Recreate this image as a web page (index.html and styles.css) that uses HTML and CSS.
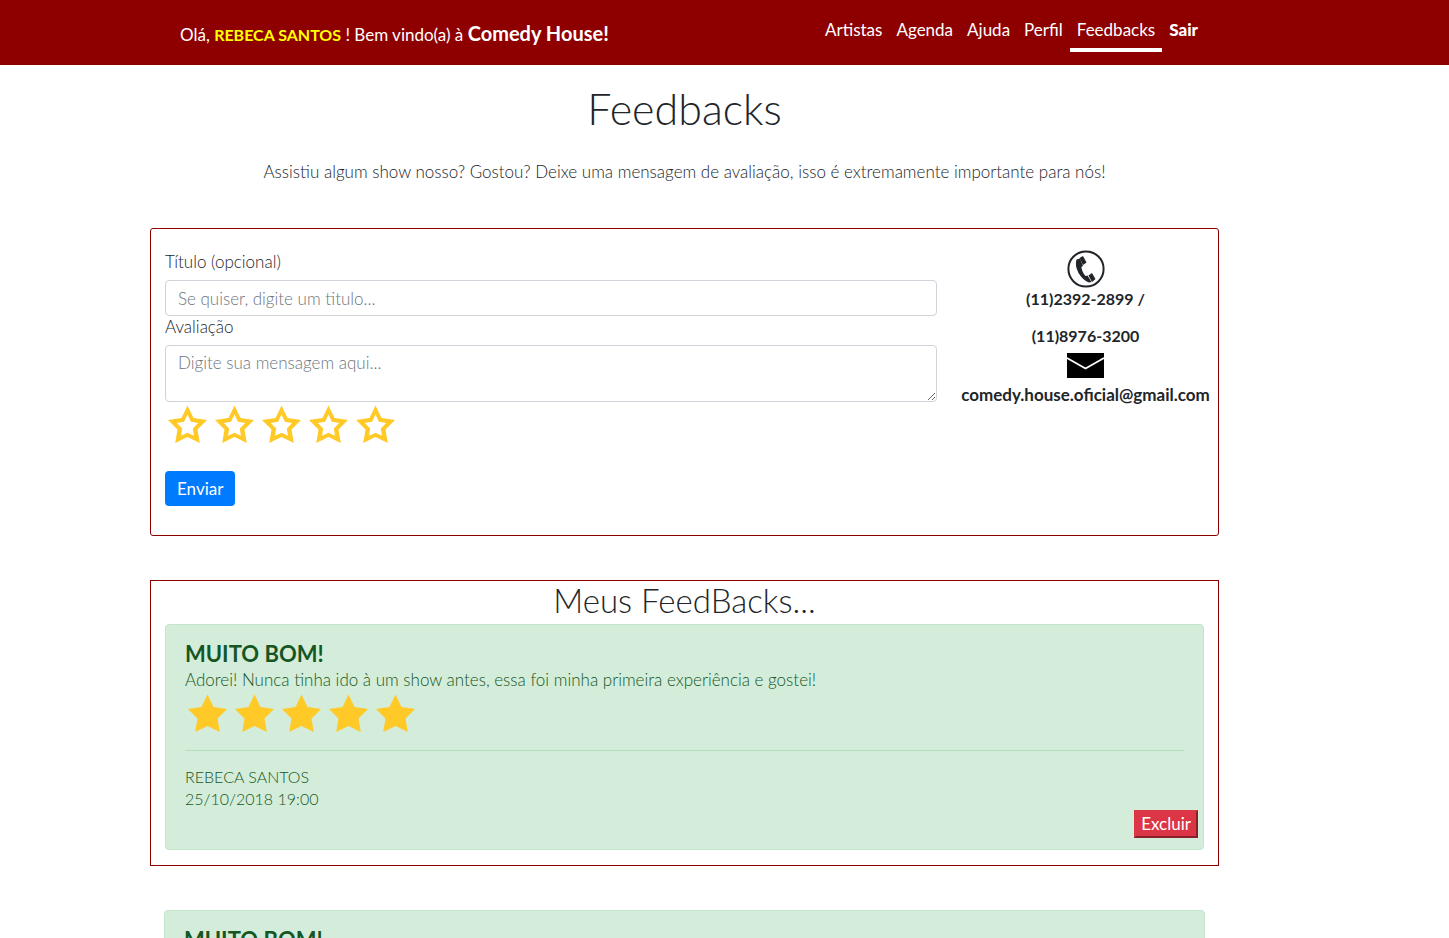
FILE: index.html
```html
<!DOCTYPE html>
<html lang="pt-BR">
<head>
<meta charset="utf-8">
<title>Feedbacks - Comedy House</title>
<link rel="stylesheet" href="styles.css">
</head>
<body>
<svg class="sprite" aria-hidden="true">
  <symbol id="star-empty" viewBox="1 0 46 46"><path fill="#ffca28" fill-rule="evenodd" d="M23 3.500l6 12.500 13.500 2-9.500 9.500 2.300 13.500L23 35l-12.300 6L13 27.500 3.500 18 17 16zM23 12.500l-3.400 7.300-7.300 1.200 5.400 5.500-1.200 7.300L23 30.800l6.500 3-1.200-7.300 5.400-5.500-7.300-1.200z"/></symbol>
  <symbol id="star-full" viewBox="1 0 46 46"><path fill="#ffca28" d="M23 3.500l6 12.500 13.500 2-9.500 9.500 2.300 13.500L23 35l-12.300 6L13 27.500 3.500 18 17 16z"/></symbol>
</svg>
<header class="topbar">
  <p class="greeting">Olá, <strong class="user">REBECA SANTOS</strong> ! Bem vindo(a) à <strong class="brand">Comedy House!</strong></p>
  <nav class="menu">
    <a href="#">Artistas</a>
    <a href="#">Agenda</a>
    <a href="#">Ajuda</a>
    <a href="#">Perfil</a>
    <a href="#" class="active" aria-current="page">Feedbacks</a>
    <a href="#" class="exit">Sair</a>
  </nav>
</header>
<main class="page">
  <h1 class="title">Feedbacks</h1>
  <p class="intro">Assistiu algum show nosso? Gostou? Deixe uma mensagem de avaliação, isso é extremamente importante para nós!</p>

  <section class="panel form-panel">
    <form class="form">
      <label for="titulo">Título (opcional)</label>
      <input class="field" id="titulo" type="text" placeholder="Se quiser, digite um titulo...">
      <label for="mensagem">Avaliação</label>
      <textarea class="field message" id="mensagem" placeholder="Digite sua mensagem aqui..."></textarea>
      <div class="stars">
        <button type="button" aria-label="1 estrela"><svg><use href="#star-empty"/></svg></button>
        <button type="button" aria-label="2 estrelas"><svg><use href="#star-empty"/></svg></button>
        <button type="button" aria-label="3 estrelas"><svg><use href="#star-empty"/></svg></button>
        <button type="button" aria-label="4 estrelas"><svg><use href="#star-empty"/></svg></button>
        <button type="button" aria-label="5 estrelas"><svg><use href="#star-empty"/></svg></button>
      </div>
      <button class="send" type="submit">Enviar</button>
    </form>
    <address class="contact">
      <svg class="phone" viewBox="0 0 38 38" aria-hidden="true">
        <circle cx="19" cy="19" r="17.600" fill="none" stroke="#212529" stroke-width="2"/>
        <path fill="#212529" d="M9.500 9.500q-2 5.500 2 13.500 5 8 10.500 9.500l2.500-.5-4-6.500-2 .5q-3-3-4.200-9l1.700-1-3-7.500z"/>
        <path fill="#212529" d="M12.500 8l3.500-2 3.500 6.500-3.500 2.500zM21.500 25.500l3.500-2.500 3.500 6-3.500 3z"/>
      </svg>
      <p class="number">(11)2392-2899 /</p>
      <p>(11)8976-3200</p>
      <svg class="mail" viewBox="0 0 38 25" preserveAspectRatio="none" aria-hidden="true">
        <path d="M0 0h38v25H0z"/>
        <path fill="none" stroke="#fff" stroke-width="1.800" d="M0 5l19 10.500L38 5"/>
      </svg>
      <p class="email">comedy.house.oficial@gmail.com</p>
    </address>
  </section>

  <section class="panel mine">
    <h2 class="subtitle">Meus FeedBacks...</h2>
    <article class="feedback">
      <h3>MUITO BOM!</h3>
      <p>Adorei! Nunca tinha ido à um show antes, essa foi minha primeira experiência e gostei!</p>
      <div class="stars" role="img" aria-label="5 estrelas">
        <svg><use href="#star-full"/></svg><svg><use href="#star-full"/></svg><svg><use href="#star-full"/></svg><svg><use href="#star-full"/></svg><svg><use href="#star-full"/></svg>
      </div>
      <hr>
      <p class="meta">REBECA SANTOS</p>
      <p class="meta">25/10/2018 19:00</p>
      <button class="delete" type="button">Excluir</button>
    </article>
  </section>

  <section class="others">
    <article class="feedback">
      <h3>MUITO BOM!</h3>
    </article>
  </section>
</main>
</body>
</html>
```
FILE: styles.css
```css
* { box-sizing: border-box; }
html, body { height: 100%; }
body {
  margin: 0;
  overflow: hidden;
  background: #fff;
  color: #212529;
  font: 300 17px/22px Lato, "Open Sans", sans-serif;
}
h1, h2, h3, p { margin: 0; }
button, input, textarea { font: inherit; }
.sprite { display: none; }

.topbar {
  display: flex;
  justify-content: space-between;
  align-items: flex-start;
  min-height: 65px;
  padding: 14px 244px 0 180px;
  background: #8e0000;
  color: #fff;
  font-weight: 400;
}
.greeting { padding-top: 8px; }
.user { color: #ff0; font-size: 16px; }
.brand { font-size: 20px; }
.menu { display: flex; }
.menu a {
  padding: 5px 7px 7px;
  border-bottom: 4px solid transparent;
  color: inherit;
  text-decoration: none;
}
.menu .active { border-color: #fff; }
.menu .exit { font-weight: 900; }

.page { padding: 20px 230px 0 150px; }
.title { text-align: center; font-size: 43px; line-height: 48px; font-weight: 300; }
.intro { margin-top: 28px; text-align: center; }

.panel { margin-top: 44px; border: 1px solid #8e0000; }
.form-panel {
  display: flex;
  min-height: 308px;
  margin-top: 45px;
  padding: 21px 8px 28px 14px;
  border-radius: 3px;
}
.form {
  flex: 1;
  display: flex;
  flex-direction: column;
  align-items: flex-start;
  padding-top: 1px;
}
.form label { margin-bottom: 7px; }
.field {
  width: 100%;
  height: 36px;
  padding: 6px 12px;
  border: 1px solid #ced4da;
  border-radius: 4px;
  background: #fff;
  color: #495057;
}
.field::placeholder { color: #6c757d; opacity: 1; }
.message { height: 57px; resize: vertical; display: block; }
.stars { display: flex; }
.stars button { padding: 0; border: 0; background: none; }
.stars svg { display: block; width: 47px; height: 46px; }
.send {
  margin-top: 23px;
  height: 35px;
  padding: 0 12px;
  border: 0;
  border-radius: 4px;
  background: #007bff;
  color: #fff;
  font-weight: 400;
}
.contact {
  flex: 0 0 273px;
  display: flex;
  flex-direction: column;
  align-items: center;
  padding-left: 24px;
  font-size: 16px;
  font-style: normal;
  font-weight: 700;
}
.phone { width: 38px; height: 38px; }
.number { margin-bottom: 15px; }
.mail { width: 37px; height: 25px; margin: 6px 0; }
.email { font-size: 17px; }

.mine { padding: 0 14px 15px; }
.subtitle { text-align: center; font-size: 33px; line-height: 38px; font-weight: 300; margin-bottom: 5px; }
.feedback {
  display: flow-root;
  padding: 16px 19px 11px;
  border: 1px solid #c3e6cb;
  border-radius: 4px;
  background: #d4edda;
  color: #155724;
}
.feedback h3 { font-size: 22px; line-height: 26px; margin-bottom: 2px; font-weight: 700; }
.feedback hr { margin: 13px 0 15px; border: 0; border-top: 1px solid #b1dfbb; }
.feedback .meta { font-size: 16px; }
.delete {
  float: right;
  height: 28px;
  margin: 0 -14px 0 0;
  padding: 0 5px;
  border: 2px outset #dc3545;
  background: #dc3545;
  color: #fff;
  font-weight: 400;
}
.others { margin-top: 44px; padding: 0 14px; }
```
